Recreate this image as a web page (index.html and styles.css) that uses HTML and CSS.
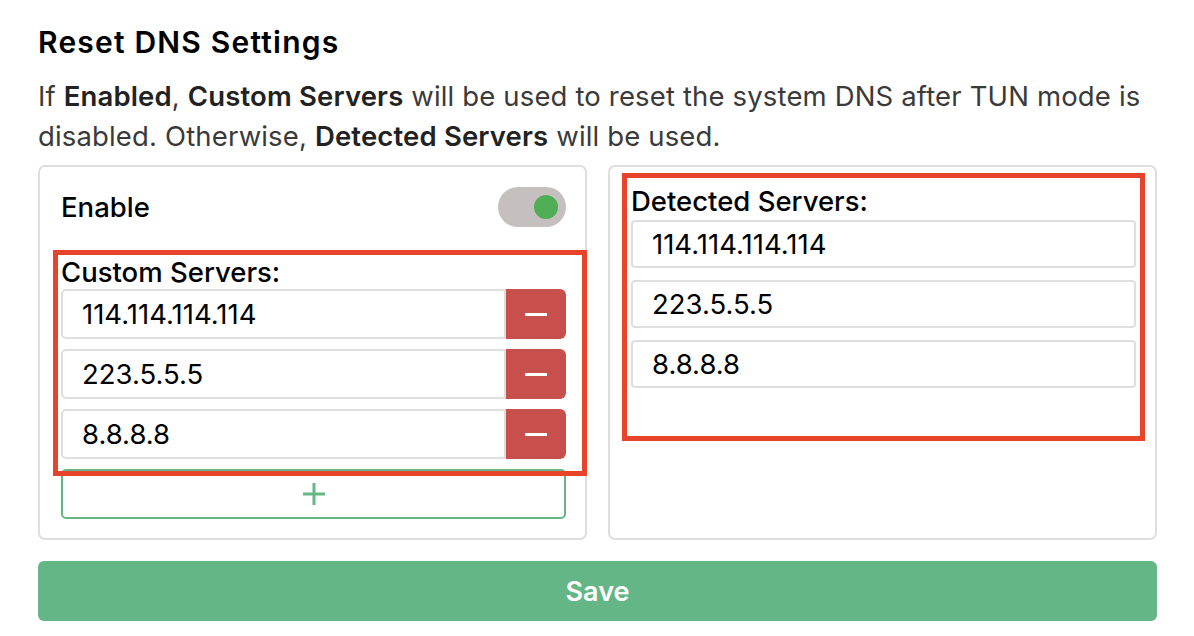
FILE: index.html
```html
<!DOCTYPE html>
<html lang="en">
<head>
<meta charset="utf-8">
<title>Reset DNS Settings</title>
<link rel="stylesheet" href="styles.css">
</head>
<body>
<main class="page">
  <h1 class="title">Reset DNS Settings</h1>
  <p class="desc">If <b>Enabled</b>, <b>Custom Servers</b> will be used to reset the system DNS after TUN mode is disabled. Otherwise, <b>Detected Servers</b> will be used.</p>
  <div class="panels">
    <section class="panel">
      <div class="enable-row">
        <span class="label">Enable</span>
        <span class="toggle"><span class="knob"></span></span>
      </div>
      <div class="label custom-label">Custom Servers:</div>
      <div class="list">
        <div class="row">
          <div class="field">114.114.114.114</div>
          <button class="remove" type="button"><span class="minus"></span></button>
        </div>
        <div class="row">
          <div class="field">223.5.5.5</div>
          <button class="remove" type="button"><span class="minus"></span></button>
        </div>
        <div class="row">
          <div class="field">8.8.8.8</div>
          <button class="remove" type="button"><span class="minus"></span></button>
        </div>
        <button class="add" type="button">
          <svg width="24" height="24" viewBox="0 0 24 24"><path d="M12 1v22M1 12h22" stroke="#64b687" stroke-width="3" fill="none"/></svg>
        </button>
      </div>
      <div class="mark mark-custom"></div>
    </section>
    <section class="panel panel-right">
      <div class="label detected-label">Detected Servers:</div>
      <div class="dlist">
        <div class="field dfield">114.114.114.114</div>
        <div class="field dfield">223.5.5.5</div>
        <div class="field dfield">8.8.8.8</div>
      </div>
      <div class="mark mark-detected"></div>
    </section>
  </div>
  <button class="save" type="button">Save</button>
</main>
</body>
</html>
```

FILE: styles.css
```css
* { box-sizing: border-box; }
html, body { margin: 0; padding: 0; background: #fff; }
body {
  font-family: Inter, "Liberation Sans", Arial, sans-serif;
  color: #000;
}
.page {
  padding: 26px 37px 0 38px;
}
.title {
  margin: 0;
  font-size: 30px;
  line-height: 32px;
  font-weight: 600;
  letter-spacing: 1.2px;
  color: #000;
}
.desc {
  margin: 18px 0 0;
  font-size: 27.5px;
  line-height: 40px;
  letter-spacing: 0.15px;
  color: #3a3a3a;
}
.desc b { color: #222; font-weight: 600; }
.panels {
  margin-top: 9px;
  display: grid;
  grid-template-columns: 1fr 1fr;
  gap: 21px;
}
.panel {
  position: relative;
  border: 2px solid #dedede;
  border-radius: 7px;
  padding: 20px 19px 19px 21px;
}
.panel-right { padding-top: 19px; }
.enable-row {
  height: 40px;
  display: flex;
  align-items: center;
  justify-content: space-between;
}
.label {
  font-size: 27.5px;
  line-height: 30px;
  font-weight: 500;
  color: #000;
}
.custom-label { margin-top: 30px; margin-bottom: 2px; }
.detected-label { margin-bottom: 4px; }
.toggle {
  width: 68px;
  height: 40px;
  border-radius: 20px;
  background: #c5bfbf;
  display: flex;
  align-items: center;
  justify-content: flex-end;
  padding-right: 8px;
}
.knob {
  width: 24px;
  height: 24px;
  border-radius: 50%;
  background: #4fad55;
}
.list {
  display: flex;
  flex-direction: column;
  gap: 10px;
}
.row {
  display: flex;
  height: 50px;
}
.field {
  flex: 1;
  border: 2px solid #dedede;
  border-radius: 5px 0 0 5px;
  padding-left: 19px;
  font-size: 27.5px;
  display: flex;
  align-items: center;
  color: #000;
}
.remove {
  width: 60px;
  border: 0;
  background: #c7504d;
  border-radius: 0 6px 6px 0;
  display: flex;
  align-items: center;
  justify-content: center;
  padding: 0;
}
.minus {
  width: 22px;
  height: 3px;
  background: #fff;
}
.add {
  height: 50px;
  border: 2px solid #64b687;
  border-radius: 5px;
  background: #fff;
  display: flex;
  align-items: center;
  justify-content: center;
  padding: 0;
}
.dlist {
  display: flex;
  flex-direction: column;
  gap: 12px;
}
.dfield {
  flex: none;
  height: 48px;
  border-radius: 4px;
}
.mark {
  position: absolute;
  border: 5px solid #e8432b;
  pointer-events: none;
}
.mark-custom {
  left: 13px;
  top: 83px;
  width: 534px;
  height: 226px;
}
.mark-detected {
  left: 12px;
  top: 6px;
  width: 523px;
  height: 268px;
}
.save {
  display: block;
  width: 100%;
  margin-top: 21px;
  height: 60px;
  border: 0;
  border-radius: 6px;
  background: #64b687;
  color: #fff;
  font-family: Inter, "Liberation Sans", Arial, sans-serif;
  font-size: 27px;
  font-weight: 600;
}
```
